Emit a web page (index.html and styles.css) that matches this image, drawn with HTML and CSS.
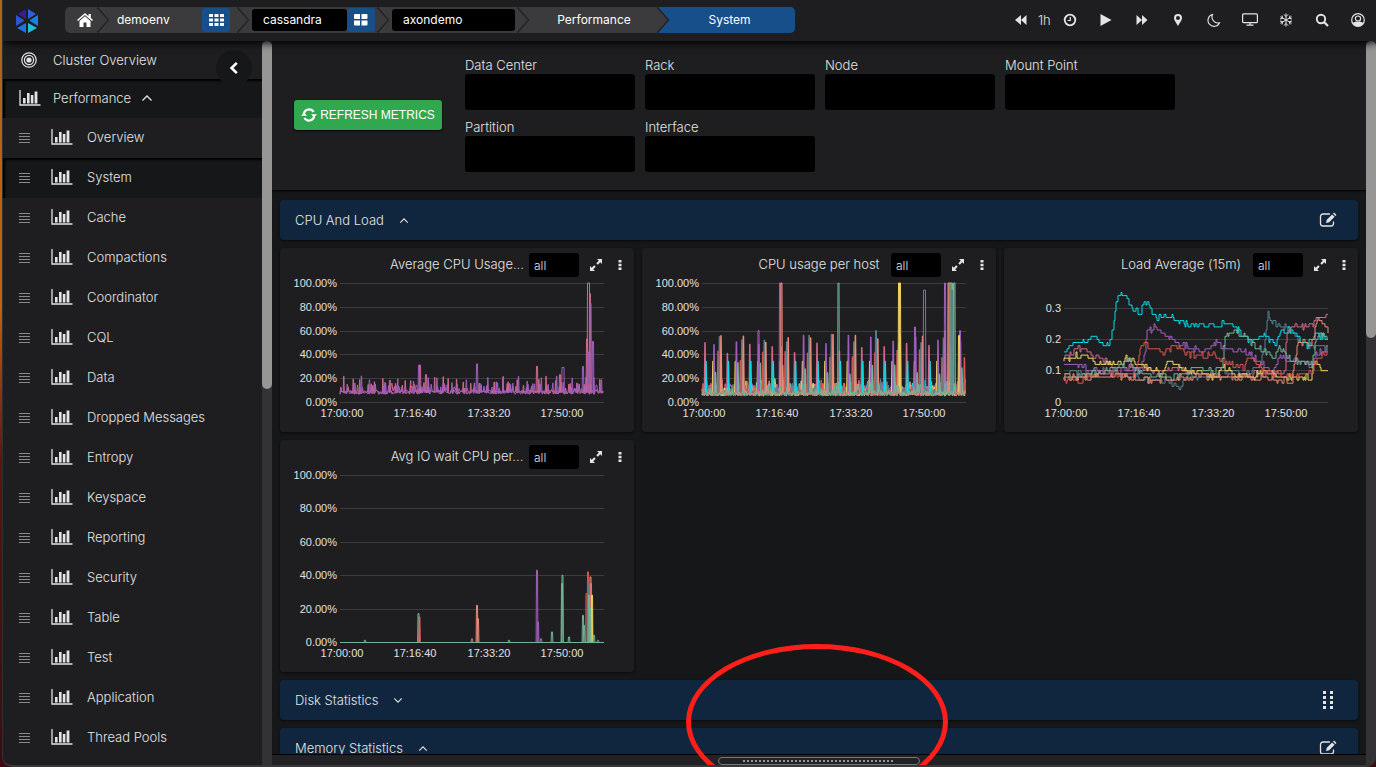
FILE: index.html
```html
<!DOCTYPE html>
<html lang="en">

<head>
    <meta charset="UTF-8">
    <meta name="viewport" content="width=device-width, initial-scale=1.0">
    <title>System - Performance</title>
    <link rel="stylesheet" href="styles.css">
</head>

<body>
    <!-- Icon sprite -->
    <svg class="sprite" aria-hidden="true">
        <symbol id="i-bars" viewBox="0 0 22 16">
            <path d="M1 0v15h20.500" fill="none" stroke="currentColor" stroke-width="1.300" />
            <path d="M4 8h2.600v5.500H4zM8 3h2.600v10.500H8zM11.800 5h2.600v8.500h-2.600zM15.600 1.500h2.800v12h-2.800z" fill="currentColor" />
        </symbol>
        <symbol id="i-drag" viewBox="0 0 12 11">
            <path d="M0 1.500h11M0 4.500h11M0 7.500h11M0 10.500h11" stroke="currentColor" stroke-width="1" />
        </symbol>
        <symbol id="i-up" viewBox="0 0 12 8">
            <path d="M1.500 6.500L6 2l4.500 4.500" fill="none" stroke="currentColor" stroke-width="1.300" />
        </symbol>
        <symbol id="i-down" viewBox="0 0 12 8">
            <path d="M1.500 1.500L6 6l4.500-4.500" fill="none" stroke="currentColor" stroke-width="1.300" />
        </symbol>
        <symbol id="i-sep" viewBox="0 0 13 26">
            <path d="M0 0L12 13L0 26z" fill="#3b3b3d" />
            <path d="M0 0L11.500 13L0 26" fill="none" stroke="#242426" stroke-width="1.500" />
        </symbol>
        <symbol id="i-expand" viewBox="0 0 14 14">
            <path d="M8 1h5v5l-1.700-1.700-2.500 2.500-1.500-1.500 2.500-2.500zM6 13H1V8l1.700 1.700 2.500-2.500 1.500 1.500-2.500 2.500z" fill="currentColor" />
        </symbol>
        <symbol id="i-more" viewBox="0 0 4 12">
            <path d="M.5 1h3v2.500h-3zM.5 4.800h3v2.500h-3zM.5 8.600h3v2.500h-3z" fill="currentColor" />
        </symbol>
        <symbol id="i-edit" viewBox="0 0 18 16">
            <path d="M11 2H4a2.500 2.500 0 0 0-2.500 2.500v7A2.500 2.500 0 0 0 4 14h8a2.500 2.500 0 0 0 2.500-2.500V9.500" fill="none" stroke="currentColor" stroke-width="1.300" />
            <path d="M7 11l.8-3.200L13.200 2.400l2.400 2.400-5.400 5.400zM14 1.600l1.100-1.100 2.400 2.400-1.100 1.100z" fill="currentColor" />
        </symbol>
    </svg>

    <div class="window">
        <header class="topbar">
            <svg class="logo" viewBox="-12 -13 24 26" role="img" aria-label="Home">
                <path d="M-1-12v10L-9-7z" fill="#3a1c98" />
                <path d="M1-12v10L9-7z" fill="#2b62dc" />
                <path d="M-11-6L-3-1V0l-8 5z" fill="#2b55d4" />
                <path d="M11-6L3-1V0l8 5z" fill="#1c7fe6" />
                <path d="M-1 12V2L-10 7z" fill="#1e72e4" />
                <path d="M1 12V2l9 5z" fill="#1ec3d2" />
            </svg>

            <nav class="crumbs" aria-label="Breadcrumb">
                <a class="crumb crumb-home" href="#" aria-label="Home">
                    <svg width="16" height="14" viewBox="0 0 16 14"><path d="M8 0L0 7l1 1 7-6 7 6 1-1-2.200-2V1h-2.300v2.200zM8 3.200L2.500 8v6h4V9.500h3V14h4V8z" fill="currentColor" /></svg>
                    <svg class="sep"><use href="#i-sep" /></svg>
                </a>
                <div class="crumb">
                    <a class="crumb-name" href="#">demoenv</a>
                    <button class="crumb-btn" aria-label="Environments">
                        <svg width="15" height="12" viewBox="0 0 15 12"><path d="M0 0h4v3H0zM5.500 0h4v3h-4zM11 0h4v3h-4zM0 4.500h4v3H0zM5.500 4.500h4v3h-4zM11 4.500h4v3h-4zM0 9h4v3H0zM5.500 9h4v3h-4zM11 9h4v3h-4z" fill="currentColor" /></svg>
                    </button>
                    <svg class="sep"><use href="#i-sep" /></svg>
                </div>
                <div class="crumb">
                    <select class="crumb-select" aria-label="Cluster type"><option>cassandra</option></select>
                    <button class="crumb-btn" aria-label="Clusters">
                        <svg width="14" height="12" viewBox="0 0 14 12"><path d="M1 0h5v5H1a1 1 0 0 1-1-1V1a1 1 0 0 1 1-1zM7.500 0h5a1 1 0 0 1 1 1v3a1 1 0 0 1-1 1h-5zM0 6.500h6v5H1a1 1 0 0 1-1-1zM7.500 6.500h6v4a1 1 0 0 1-1 1h-5z" fill="currentColor" /></svg>
                    </button>
                    <svg class="sep"><use href="#i-sep" /></svg>
                </div>
                <div class="crumb">
                    <select class="crumb-select crumb-wide" aria-label="Cluster"><option>axondemo</option></select>
                    <svg class="sep"><use href="#i-sep" /></svg>
                </div>
                <a class="crumb crumb-text" href="#">Performance<svg class="sep"><use href="#i-sep" /></svg></a>
                <a class="crumb crumb-text crumb-active" href="#">System</a>
            </nav>

            <div class="tools">
                <button class="tool tool-back" aria-label="Back"><svg width="12" height="12" viewBox="0 0 12 12"><path d="M6 1v10L0 6zM11.500 1v10l-5.500-5z" fill="currentColor" /></svg></button>
                <span class="range">1h</span>
                <button class="tool" aria-label="Time range"><svg width="14" height="14" viewBox="0 0 14 14"><circle cx="7" cy="7" r="5.300" fill="none" stroke="currentColor" stroke-width="1.800" /><path d="M7.300 4v3.500H4.500" fill="none" stroke="currentColor" stroke-width="1.200" /></svg></button>
                <button class="tool" aria-label="Play"><svg width="12" height="14" viewBox="0 0 12 14"><path d="M.5 1l11 6-11 6z" fill="currentColor" /></svg></button>
                <button class="tool" aria-label="Forward"><svg width="12" height="12" viewBox="0 0 12 12"><path d="M.5 1v10L6 6zM6 1v10l5.500-5z" fill="currentColor" /></svg></button>
                <button class="tool" aria-label="Pin"><svg width="10" height="14" viewBox="0 0 10 14"><path fill-rule="evenodd" d="M5 1a4 4 0 0 1 4 4c0 2-1 2.800-4 8-3-5.200-4-6-4-8a4 4 0 0 1 4-4zM5 3a2 2 0 1 0 0 4 2 2 0 0 0 0-4z" fill="currentColor" /></svg></button>
                <button class="tool" aria-label="Dark mode"><svg width="14" height="14" viewBox="0 0 14 14"><path d="M5.500 1.500a6 6 0 1 0 7 8.200 6 6 0 0 1-7-8.200z" fill="none" stroke="currentColor" stroke-width="1.100" /></svg></button>
                <button class="tool" aria-label="Monitor"><svg width="16" height="13" viewBox="0 0 16 13"><rect x=".6" y=".9" width="14.800" height="8.800" rx="1" fill="none" stroke="currentColor" stroke-width="1.200" /><path d="M8 10v2M4.500 12.200h7" stroke="currentColor" stroke-width="1.200" /></svg></button>
                <button class="tool" aria-label="Freeze"><svg width="14" height="14" viewBox="0 0 14 14"><path d="M7 .5v13M1.400 3.700l11.200 6.600M1.400 10.300l11.200-6.600M5 1.500l2 2 2-2M5 12.500l2-2 2 2M1 6l2.700-.7L3 2.500M13 8l-2.700.7.7 2.800M13 6l-2.700-.7.7-2.800M1 8l2.700.7L3 11.500" fill="none" stroke="currentColor" stroke-width="1" /></svg></button>
                <button class="tool" aria-label="Search"><svg width="14" height="14" viewBox="0 0 14 14"><circle cx="6" cy="6" r="4.200" fill="none" stroke="currentColor" stroke-width="1.900" /><path d="M9 9l4 4" stroke="currentColor" stroke-width="2.300" /></svg></button>
                <button class="tool" aria-label="Account"><svg width="14" height="14" viewBox="0 0 14 14"><circle cx="7" cy="7" r="6.300" fill="none" stroke="currentColor" stroke-width="1.200" /><circle cx="7" cy="5.600" r="2.600" fill="none" stroke="currentColor" stroke-width="1.200" /><path d="M1.800 10C3 9 4.300 8.600 5.200 8.400a3.200 3.200 0 0 0 3.600 0c.9.200 2.200.6 3.400 1.600L10.500 12.400 7 13.400 3.500 12.400z" fill="currentColor" /></svg></button>
            </div>
        </header>

        <div class="body">
            <aside class="sidebar">
                <nav class="menu">
                    <a class="item top" href="#"><svg class="target" viewBox="0 0 16 16"><g fill="none" stroke="currentColor"><circle cx="8" cy="8" r="7.200" stroke-width="1.200" /><circle cx="8" cy="8" r="4.600" stroke-width="1.200" /></g><circle cx="8" cy="8" r="2.600" fill="currentColor" /></svg>Cluster Overview</a>
                    <a class="item top open" href="#"><svg class="bars"><use href="#i-bars" /></svg>Performance<svg class="caret"><use href="#i-up" /></svg></a>
                    <a class="item" href="#"><svg class="drag"><use href="#i-drag" /></svg><svg class="bars"><use href="#i-bars" /></svg>Overview</a>
                    <a class="item selected" href="#"><svg class="drag"><use href="#i-drag" /></svg><svg class="bars"><use href="#i-bars" /></svg>System</a>
                    <a class="item" href="#"><svg class="drag"><use href="#i-drag" /></svg><svg class="bars"><use href="#i-bars" /></svg>Cache</a>
                    <a class="item" href="#"><svg class="drag"><use href="#i-drag" /></svg><svg class="bars"><use href="#i-bars" /></svg>Compactions</a>
                    <a class="item" href="#"><svg class="drag"><use href="#i-drag" /></svg><svg class="bars"><use href="#i-bars" /></svg>Coordinator</a>
                    <a class="item" href="#"><svg class="drag"><use href="#i-drag" /></svg><svg class="bars"><use href="#i-bars" /></svg>CQL</a>
                    <a class="item" href="#"><svg class="drag"><use href="#i-drag" /></svg><svg class="bars"><use href="#i-bars" /></svg>Data</a>
                    <a class="item" href="#"><svg class="drag"><use href="#i-drag" /></svg><svg class="bars"><use href="#i-bars" /></svg>Dropped Messages</a>
                    <a class="item" href="#"><svg class="drag"><use href="#i-drag" /></svg><svg class="bars"><use href="#i-bars" /></svg>Entropy</a>
                    <a class="item" href="#"><svg class="drag"><use href="#i-drag" /></svg><svg class="bars"><use href="#i-bars" /></svg>Keyspace</a>
                    <a class="item" href="#"><svg class="drag"><use href="#i-drag" /></svg><svg class="bars"><use href="#i-bars" /></svg>Reporting</a>
                    <a class="item" href="#"><svg class="drag"><use href="#i-drag" /></svg><svg class="bars"><use href="#i-bars" /></svg>Security</a>
                    <a class="item" href="#"><svg class="drag"><use href="#i-drag" /></svg><svg class="bars"><use href="#i-bars" /></svg>Table</a>
                    <a class="item" href="#"><svg class="drag"><use href="#i-drag" /></svg><svg class="bars"><use href="#i-bars" /></svg>Test</a>
                    <a class="item" href="#"><svg class="drag"><use href="#i-drag" /></svg><svg class="bars"><use href="#i-bars" /></svg>Application</a>
                    <a class="item" href="#"><svg class="drag"><use href="#i-drag" /></svg><svg class="bars"><use href="#i-bars" /></svg>Thread Pools</a>
                </nav>
                <button class="collapse" aria-label="Collapse menu"><svg width="10" height="14" viewBox="0 0 10 14"><path d="M7.800 1.800L2.600 7l5.200 5.200" fill="none" stroke="currentColor" stroke-width="2.600" /></svg></button>
            </aside>
            <div class="scroll"><div class="thumb thumb-menu"></div></div>

            <main class="content">
                <div class="scroller">
                    <section class="filters">
                        <button class="refresh">
                            <svg width="16" height="14" viewBox="0 0 16 14"><path d="M2.800 5.500A5.400 5.400 0 0 1 12.600 4M13.200 8.500A5.400 5.400 0 0 1 3.400 10" fill="none" stroke="currentColor" stroke-width="2.200" /><path d="M10 6.200h6L13 9.500zM0 7.800h6L3 4.500z" fill="currentColor" /></svg>
                            REFRESH METRICS
                        </button>
                        <div class="fields">
                            <div class="field"><label for="dc">Data Center</label><select id="dc"></select></div>
                            <div class="field"><label for="rack">Rack</label><select id="rack"></select></div>
                            <div class="field"><label for="node">Node</label><select id="node"></select></div>
                            <div class="field"><label for="mount">Mount Point</label><select id="mount"></select></div>
                            <div class="field"><label for="partition">Partition</label><select id="partition"></select></div>
                            <div class="field"><label for="interface">Interface</label><select id="interface"></select></div>
                        </div>
                    </section>

                    <div class="panels">
                        <div class="section-bar">
                            <h2>CPU And Load</h2>
                            <button class="icon-btn" aria-label="Collapse"><svg class="caret"><use href="#i-up" /></svg></button>
                            <button class="icon-btn bar-end" aria-label="Edit"><svg class="edit"><use href="#i-edit" /></svg></button>
                        </div>

                        <div class="cards">
                            <article class="card">
                                <header class="card-head">
                                    <h3>Average CPU Usage...</h3>
                                    <select aria-label="Series"><option>all</option></select>
                                    <button class="icon-btn" aria-label="Expand"><svg class="expand"><use href="#i-expand" /></svg></button>
                                    <button class="icon-btn" aria-label="More"><svg class="more"><use href="#i-more" /></svg></button>
                                </header>
                                <svg class="chart" id="avgCpu" viewBox="0 0 354 155"></svg>
                            </article>
                            <article class="card">
                                <header class="card-head">
                                    <h3>CPU usage per host</h3>
                                    <select aria-label="Series"><option>all</option></select>
                                    <button class="icon-btn" aria-label="Expand"><svg class="expand"><use href="#i-expand" /></svg></button>
                                    <button class="icon-btn" aria-label="More"><svg class="more"><use href="#i-more" /></svg></button>
                                </header>
                                <svg class="chart" id="hostCpu" viewBox="0 0 354 155"></svg>
                            </article>
                            <article class="card">
                                <header class="card-head">
                                    <h3>Load Average (15m)</h3>
                                    <select aria-label="Series"><option>all</option></select>
                                    <button class="icon-btn" aria-label="Expand"><svg class="expand"><use href="#i-expand" /></svg></button>
                                    <button class="icon-btn" aria-label="More"><svg class="more"><use href="#i-more" /></svg></button>
                                </header>
                                <svg class="chart" id="load" viewBox="0 0 354 155"></svg>
                            </article>
                            <article class="card">
                                <header class="card-head">
                                    <h3>Avg IO wait CPU per...</h3>
                                    <select aria-label="Series"><option>all</option></select>
                                    <button class="icon-btn" aria-label="Expand"><svg class="expand"><use href="#i-expand" /></svg></button>
                                    <button class="icon-btn" aria-label="More"><svg class="more"><use href="#i-more" /></svg></button>
                                </header>
                                <svg class="chart" id="ioWait" viewBox="0 0 354 203"></svg>
                            </article>
                        </div>

                        <div class="section-bar">
                            <h2>Disk Statistics</h2>
                            <button class="icon-btn" aria-label="Expand section"><svg class="caret"><use href="#i-down" /></svg></button>
                            <button class="icon-btn bar-end" aria-label="Move">
                                <svg width="12" height="20" viewBox="0 0 12 20"><path d="M1 1h3v3H1zM8 1h3v3H8zM1 6h3v3H1zM8 6h3v3H8zM1 11h3v3H1zM8 11h3v3H8zM1 16h3v3H1zM8 16h3v3H8z" fill="currentColor" /></svg>
                            </button>
                        </div>
                        <div class="section-bar">
                            <h2>Memory Statistics</h2>
                            <button class="icon-btn" aria-label="Collapse"><svg class="caret"><use href="#i-up" /></svg></button>
                            <button class="icon-btn bar-end" aria-label="Edit"><svg class="edit"><use href="#i-edit" /></svg></button>
                        </div>
                    </div>
                </div>
                <footer class="drawer">
                    <button class="handle" aria-label="Open drawer"><span class="dots"></span></button>
                    <div class="highlight"></div>
                </footer>
            </main>
            <div class="scroll"><div class="thumb thumb-page"></div></div>
        </div>
    </div>

    <script src="script.js"></script>
</body>

</html>
```
FILE: styles.css
```css
* {
    box-sizing: border-box;
}

body {
    margin: 0;
    height: 100vh;
    padding-left: 2px;
    background: linear-gradient(#a8661c, #c4620c 40%, #5a1414 60%, #3c0a12);
    font-family: Inter, "Liberation Sans", sans-serif;
    font-size: 13px;
    font-weight: 300;
    color: #e4e4e4;
    overflow: hidden;
}

a {
    color: inherit;
    text-decoration: none;
}

button,
select {
    font: inherit;
    color: inherit;
    border: 0;
    padding: 0;
    background: none;
}

select {
    appearance: none;
    background: #000;
    border-radius: 3px;
}

.sprite {
    display: none;
}

.window {
    height: 100%;
    display: flex;
    flex-direction: column;
    background: #1e1e20;
    border-left: 1px solid #303033;
    border-bottom: 2px solid #38383a;
    border-radius: 0 0 10px 10px;
    overflow: hidden;
}

/* Top bar */
.topbar {
    position: relative;
    z-index: 3;
    flex: none;
    height: 41px;
    display: flex;
    align-items: center;
    padding-bottom: 2px;
    background: #1e1e20;
    box-shadow: 0 2px 8px #000;
}

.logo {
    width: 24px;
    height: 26px;
    margin: 2px 26px 0 12px;
}

.crumbs {
    display: flex;
    height: 26px;
    background: #3b3b3d;
    border-radius: 5px;
    overflow: hidden;
    font-size: 12px;
    font-weight: 400;
    color: #fff;
}

.crumb {
    position: relative;
    display: flex;
    align-items: center;
    width: 140px;
    padding-left: 2px;
}

.crumb-home {
    width: 45px;
    padding-left: 12px;
}

.crumb-name {
    flex: 1;
    padding-left: 5px;
}

.crumb-select {
    width: 95px;
    height: 22px;
    padding-left: 11px;
}

.crumb-wide {
    width: 123px;
}

.crumb-btn {
    display: flex;
    align-items: center;
    justify-content: center;
    width: 28px;
    height: 24px;
    margin-right: 20px;
    background: #174f8b;
    border-radius: 3px;
}

.crumb-select + .crumb-btn {
    margin-right: 0;
}

.crumb-text {
    padding: 0;
    justify-content: center;
}

.crumb-text:not(.crumb-active) {
    padding-right: 14px;
    padding-left: 2px;
    justify-content: center;
}

.crumb-active {
    width: 137px;
    margin-left: -12px;
    padding-left: 6px;
    background: #174f8b;
}

.crumb-text .sep {
    z-index: 2;
}

.sep {
    position: absolute;
    z-index: 1;
    top: 0;
    right: 0;
    width: 13px;
    height: 26px;
}

.tools {
    display: flex;
    align-items: center;
    margin-left: auto;
}

.tool {
    display: flex;
    align-items: center;
    justify-content: center;
    width: 36px;
    height: 36px;
}

.tool-back {
    width: 34px;
}

.range {
    width: 14px;
}

/* Side menu */
.body {
    flex: 1;
    min-height: 0;
    display: flex;
}

.sidebar {
    position: relative;
    flex: none;
    width: 259px;
}

.menu {
    height: 100%;
    overflow: hidden;
}

.item {
    display: flex;
    align-items: center;
    height: 40px;
    padding: 0 16px 2px;
}

.top {
    height: 38px;
    padding-bottom: 0;
}

.open,
.selected {
    background: #161719;
    box-shadow: inset 2px 2px 2px #000;
}

.open {
    height: 39px;
    padding-bottom: 2px;
}

.target {
    width: 16px;
    height: 16px;
    margin: 0 16px 0 2px;
}

.bars {
    width: 22px;
    height: 16px;
    margin-right: 12px;
}

.item:not(.top) .bars {
    margin-right: 14px;
}

.drag {
    width: 12px;
    height: 11px;
    margin-right: 20px;
    color: #8a8a8c;
}

.caret {
    width: 12px;
    height: 8px;
}

.item .caret {
    margin-left: 10px;
}

.collapse {
    position: absolute;
    top: 9px;
    right: 10px;
    display: flex;
    align-items: center;
    justify-content: center;
    width: 36px;
    height: 36px;
    border-radius: 50%;
    background: #161719;
    color: #fff;
}

.scroll {
    flex: none;
    width: 10px;
    background: #333335;
}

.thumb {
    background: #969696;
    border-radius: 5px;
}

.thumb-menu {
    height: 48%;
}

.thumb-page {
    height: 41%;
}

/* Content */
.content {
    flex: 1;
    min-width: 0;
    display: flex;
    flex-direction: column;
    background: #161719;
}

.scroller {
    flex: 1;
    min-height: 0;
    overflow: hidden;
}

.filters {
    display: flex;
    align-items: center;
    gap: 23px;
    padding: 16px 22px 18px;
    background: #1e1e20;
    box-shadow: 0 1px 2px #000;
}

.refresh {
    display: flex;
    align-items: center;
    justify-content: center;
    gap: 3px;
    width: 148px;
    height: 30px;
    background: #2fa84f;
    border-radius: 3px;
    box-shadow: 0 1px 2px #000;
    color: #fff;
    font-family: "Liberation Sans", sans-serif;
    font-weight: 400;
    font-size: 12px;
    white-space: nowrap;
}

.fields {
    display: grid;
    grid-template-columns: repeat(4, 170px);
    row-gap: 9px;
    column-gap: 10px;
}

.field {
    display: flex;
    flex-direction: column;
}

.field label {
    padding-bottom: 1px;
    line-height: 16px;
}

.field select {
    height: 36px;
}

.panels {
    display: flex;
    flex-direction: column;
    gap: 8px;
    padding: 10px 8px;
}

.section-bar {
    display: flex;
    align-items: center;
    height: 40px;
    padding: 0 20px 0 15px;
    background: #10263e;
    border-radius: 4px;
    box-shadow: 0 1px 2px #0a0b0c;
}

h2,
h3 {
    margin: 0;
    font-size: 13px;
    font-weight: 300;
}

.section-bar h2 {
    margin-right: 8px;
}

.icon-btn {
    display: flex;
    align-items: center;
    justify-content: center;
    width: 24px;
    height: 24px;
}

.section-bar .caret {
    width: 10px;
    height: 7px;
}

.bar-end {
    width: 20px;
    margin-left: auto;
}

.edit {
    width: 18px;
    height: 16px;
}

.cards {
    display: grid;
    grid-template-columns: repeat(3, 1fr);
    gap: 8px;
}

.card {
    background: #1e1e20;
    border-radius: 4px;
    box-shadow: 0 1px 3px #0a0b0c;
}

.card-head {
    display: flex;
    align-items: center;
    justify-content: flex-end;
    height: 29px;
    padding: 5px 2px 0 0;
}

.card-head h3 {
    width: 136px;
    margin-right: 4px;
    padding-bottom: 2px;
    text-align: center;
    white-space: nowrap;
}

.card-head select {
    width: 50px;
    height: 24px;
    margin-right: 5px;
    padding-left: 5px;
    font-size: 12px;
}

.expand {
    width: 14px;
    height: 14px;
}

.more {
    width: 4px;
    height: 12px;
}

/* Charts */
.chart {
    display: block;
    width: 100%;
}

.chart text {
    fill: #e0e0e0;
    font-family: "Liberation Sans", sans-serif;
    font-size: 11px;
    font-weight: 400;
}

.chart .grid {
    stroke: #3c3c3e;
}

.chart .series {
    fill: none;
    stroke-linejoin: round;
}

/* Bottom drawer */
.drawer {
    position: relative;
    flex: none;
    height: 11px;
    border-top: 1px solid #000;
    background: #222224;
}

.handle {
    display: flex;
    justify-content: center;
    align-items: flex-start;
    width: 202px;
    height: 8px;
    margin: 2px auto 0;
    padding-top: 2px;
    border: 1px solid #77777a;
    border-radius: 4px;
}

.dots {
    width: 152px;
    height: 2px;
    background: repeating-linear-gradient(90deg, #969698 0 2px, transparent 2px 4px);
}

.highlight {
    position: absolute;
    left: calc(50% - 133px);
    bottom: -35px;
    width: 262px;
    height: 156px;
    border: 5px solid #ff1f1a;
    border-radius: 50%;
    pointer-events: none;
}
```
FILE: script.js
```js
const LEFT = 60;
const RIGHT = 324;
const TOP = 6;
const COLORS = {
    purple: "#9f5fc0",
    pink: "#cf6a8c",
    cyan: "#00dbe8",
    yellow: "#f0d55c",
    green: "#6fb596",
    salmon: "#ea8c74",
    red: "#d9554f",
    slate: "#56808e"
};

let seed = 7;
function rand() {
    seed = (seed * 16807) % 2147483647;
    return seed / 2147483647;
}

function add(svg, name, attrs, text) {
    const el = document.createElementNS("http://www.w3.org/2000/svg", name);
    for (const key in attrs) el.setAttribute(key, attrs[key]);
    if (text) el.textContent = text;
    svg.appendChild(el);
}

function axes(svg, bottom, ticks) {
    ticks.forEach(([label, y]) => {
        add(svg, "line", { class: "grid", x1: LEFT, x2: RIGHT, y1: y + 0.5, y2: y + 0.5 });
        add(svg, "text", { x: 57, y: y + 4, "text-anchor": "end" }, label);
    });
    ["17:00:00", "17:16:40", "17:33:20", "17:50:00"].forEach((label, i) => {
        add(svg, "text", { x: 62 + Math.round(i * 73.4), y: bottom + 15, "text-anchor": "middle" }, label);
    });
}

function percentTicks(bottom) {
    return [100, 80, 60, 40, 20, 0].map(v => [v.toFixed(2) + "%", Math.round(bottom - v * (bottom - TOP) / 100)]);
}

function line(svg, points, color, toY, width = 1) {
    const d = points.map(([x, v], i) => (i ? "L" : "M") + (LEFT + x).toFixed(1) + " " + toY(v).toFixed(1)).join("");
    add(svg, "path", { class: "series", d: d, stroke: COLORS[color], "stroke-width": width });
}

// noisy base line, every few samples a short burst
function noise(base, jitter, burst, chance) {
    const points = [];
    for (let x = 0; x <= 264; x += 0.8) {
        let v = base + rand() * jitter;
        if (rand() < chance) v += rand() * burst;
        points.push([x, v]);
    }
    return points;
}

// narrow peak: [x, value, width]
function peaks(svg, list, color, toY, floor) {
    list.forEach(([x, v, w = 1]) => {
        line(svg, [[x - w / 2 - 0.4, floor], [x - w / 2, v], [x + w / 2, v], [x + w / 2 + 0.4, floor]], color, toY);
    });
}

function percentScale(bottom) {
    return v => bottom - v * (bottom - TOP) / 100;
}

// Average CPU usage
const avg = document.getElementById("avgCpu");
const y1 = percentScale(125);
axes(avg, 125, percentTicks(125));
for (const color of ["pink", "purple"]) {
    line(avg, noise(6.5, 3.5, 7, 0.25), color, y1);
    const list = [];
    for (let x = color === "pink" ? 3 : 12; x < 262; x += 7.5) list.push([x + rand() * 3, 13 + rand() * 9, 0.3]);
    peaks(avg, list, color, y1, 8);
}
peaks(avg, [[80, 31], [86, 23], [197, 30], [220, 23], [248.5, 100, 2], [247, 53], [250, 91]], "pink", y1, 8);
peaks(avg, [[79, 31], [137, 32], [223, 29, 2], [243, 30], [248, 42], [250.5, 83], [253, 51, 1]], "purple", y1, 8);

// CPU usage per host
const host = document.getElementById("hostCpu");
axes(host, 125, percentTicks(125));
Object.keys(COLORS).forEach(color => line(host, noise(5, 7, 8, 0.25), color, y1));
const cycle = [
    ["pink", 3, 46], ["cyan", 4, 34], ["yellow", 11, 34], ["purple", 12, 52],
    ["green", 13.5, 29], ["red", 16, 40], ["slate", 17.5, 54], ["salmon", 19, 56]
];
for (let i = 0; i < 12; i++) {
    cycle.forEach(([color, x, v]) => {
        const height = color === "cyan" || color === "yellow" ? v : v - 6 + rand() * 10;
        const at = x + i * 22.4;
        if (at < 263) line(host, [[at - 0.5, 8], [at, height], [at + 0.6, 8]], color, y1, 1.6);
    });
}
peaks(host, [[56.5, 60], [78, 100], [213, 63], [222.5, 94, 2], [243, 100], [258, 60]], "purple", y1, 8);
peaks(host, [[79.5, 100], [246.5, 100], [248, 100, 2]], "salmon", y1, 8);
peaks(host, [[197, 100, 1], [198, 100], [257, 56]], "yellow", y1, 8);
peaks(host, [[136.5, 100], [249.5, 100], [251, 100], [252.5, 100]], "green", y1, 8);
peaks(host, [[174, 60], [250, 94]], "slate", y1, 8);
line(host, noise(5, 3, 4, 0.2), "salmon", y1);
line(host, noise(5, 4, 9, 0.2), "green", y1);

// Load average, values in hundredths
const load = document.getElementById("load");
axes(load, 125, [["0.3", 31], ["0.2", 62], ["0.1", 93], ["0", 125]]);
const loads = {
    slate: [0, 9, 40, 10, 70, 8, 82, 7, 100, 7, 116, 5, 122, 8, 150, 9, 185, 9, 195, 11, 200, 18, 204, 28, 210, 25, 222, 24, 233, 20, 243, 18, 264, 17],
    cyan: [0, 16, 5, 18, 11, 20, 20, 19, 29, 21, 35, 19, 45, 18, 49, 24, 54, 35, 60, 34, 68, 30, 77, 28, 79, 32, 84, 31, 93, 26, 97, 28, 107, 27, 120, 25, 140, 24, 165, 25, 185, 20, 200, 21, 212, 18, 215, 22, 225, 23, 235, 20, 243, 18, 252, 22, 264, 20],
    pink: [0, 14, 15, 17, 30, 15, 48, 12, 60, 11, 100, 10, 115, 11, 130, 9, 170, 8, 180, 9, 215, 9, 221, 10, 222, 20, 228, 25, 248, 24, 252, 27, 258, 26, 264, 29],
    purple: [0, 12, 18, 11, 40, 10, 75, 10, 80, 15, 83, 22, 90, 24, 100, 21, 110, 20, 120, 18, 140, 16, 152, 19, 160, 17, 180, 16, 190, 14, 208, 10, 215, 14, 235, 13, 247, 12, 251, 15, 264, 17],
    yellow: [0, 13, 15, 15, 30, 13, 60, 12, 62, 14, 75, 12, 97, 9, 103, 13, 115, 11, 140, 9, 152, 8, 158, 11, 170, 9, 190, 8, 200, 10, 215, 8, 247, 8, 250, 13, 255, 11, 264, 9],
    red: [0, 7, 18, 7, 24, 9, 70, 9, 74, 14, 78, 19, 100, 16, 110, 18, 125, 15, 150, 15, 165, 12, 180, 11, 184, 14, 195, 11, 205, 9, 232, 9, 248, 10, 253, 14, 264, 16],
    green: [0, 8, 35, 9, 66, 13, 72, 10, 85, 9, 105, 8, 123, 8, 128, 12, 140, 11, 150, 9, 158, 12, 161, 20, 165, 23, 180, 21, 195, 17, 210, 14, 215, 17, 230, 13, 248, 12, 252, 20, 258, 22, 264, 19],
    salmon: [0, 8, 60, 8, 100, 7, 130, 8, 200, 8, 210, 7, 228, 7, 234, 20, 245, 18, 249, 20, 253, 27, 262, 24, 264, 23]
};
for (const color in loads) {
    const stops = loads[color];
    const points = [];
    let last = stops[1];
    for (let x = 0; x <= 264; x += 1) {
        let i = 0;
        while (i < stops.length - 4 && stops[i + 2] < x) i += 2;
        const part = (x - stops[i]) / (stops[i + 2] - stops[i]);
        const v = stops[i + 1] + (stops[i + 3] - stops[i + 1]) * part;
        const next = Math.abs(v - last) > 1 || rand() < 0.5 ? Math.round(v + rand() * 2 - 1) : last;
        points.push([x, last], [x, next]);
        last = next;
    }
    line(load, points, color, v => 125 - v * 3.13);
}

// IO wait
const io = document.getElementById("ioWait");
const y4 = percentScale(173);
axes(io, 173, percentTicks(173));
const waits = {
    red: [[79.5, 15], [248, 42], [246.5, 29], [251, 35]],
    salmon: [[137, 22], [138, 14], [250.5, 39], [249, 25]],
    purple: [[197, 43], [198, 12], [201, 2]],
    yellow: [[252, 28], [251.5, 20]],
    slate: [[248, 23], [249, 35]],
    green: [[78.5, 17], [212, 6], [222.5, 40], [222, 35], [229, 3], [243, 16], [244, 10], [249, 28], [250, 20], [254, 4], [169, 1], [25, 1]],
    pink: [[132, 2], [258, 1]]
};
for (const color in waits) peaks(io, waits[color], color, y4, 0);
line(io, [[0, 0], [264, 0]], "green", v => y4(v) + 0.5);
```
